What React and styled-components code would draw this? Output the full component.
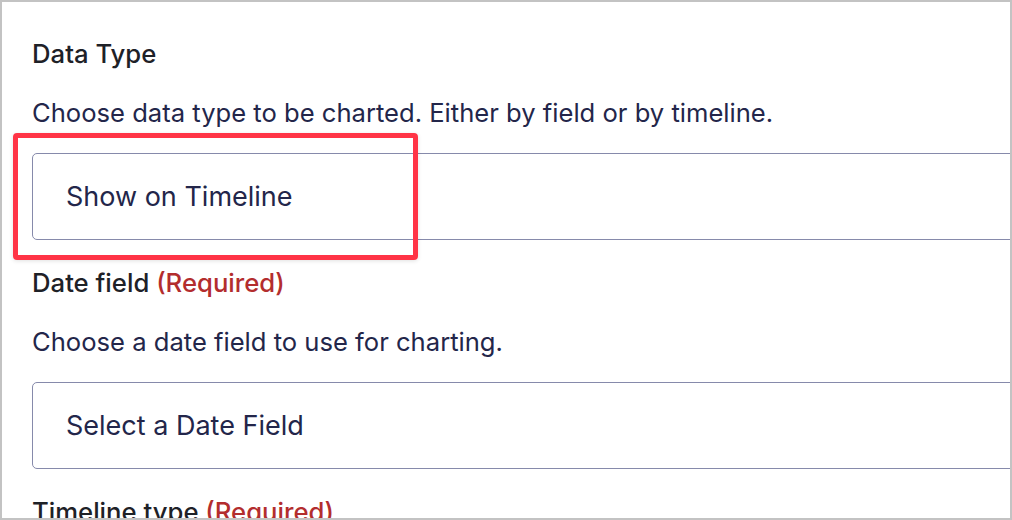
import React from 'react';
import styled, { createGlobalStyle } from 'styled-components';

const GlobalStyle = createGlobalStyle`
  html, body {
    margin: 0;
    padding: 0;
    background: #fff;
  }
  * {
    box-sizing: border-box;
  }
`;

const Frame = styled.div`
  width: 1012px;
  height: 520px;
  border: 2px solid #c3c3c3;
  overflow: hidden;
  background: #fff;
  font-family: Inter, "Noto Sans", sans-serif;
  padding: 0 0 0 30px;
`;

const Field = styled.div`
  display: flex;
  flex-direction: column;
`;

const Label = styled.div`
  font-size: 25.7px;
  line-height: 36px;
  font-weight: 500;
  color: #1e2127;
  margin-top: ${props => props.first ? '34px' : '25px'};
`;

const Required = styled.span`
  color: #b32d2e;
`;

const Description = styled.p`
  margin: 23px 0 0;
  font-size: 25.6px;
  line-height: 36px;
  color: #23264a;
`;

const InputWrap = styled.div`
  position: relative;
  margin-top: 22px;
  width: calc(100% + 40px);
`;

const Select = styled.div`
  height: 87px;
  border: 1.5px solid #868aab;
  border-radius: 5px;
  display: flex;
  align-items: center;
  padding-left: 33px;
  font-size: 27px;
  color: #23264a;
`;

const Highlight = styled.div`
  position: absolute;
  top: -20px;
  left: -19px;
  width: 405px;
  height: 127px;
  border: 5px solid #ff3446;
  border-radius: 4px;
  box-shadow: 0 1px 4px rgba(0, 0, 0, 0.12);
  pointer-events: none;
`;

const fields = [
  {
    label: 'Data Type',
    description: 'Choose data type to be charted. Either by field or by timeline.',
    value: 'Show on Timeline',
    highlight: true,
  },
  {
    label: 'Date field',
    required: true,
    description: 'Choose a date field to use for charting.',
    value: 'Select a Date Field',
  },
  {
    label: 'Timeline type',
    required: true,
    description: 'Choose how the timeline is grouped.',
    value: 'Select a Timeline Type',
  },
];

const App = () => (
  <>
    <GlobalStyle />
    <Frame>
      {fields.map((f, i) => (
        <Field key={f.label}>
          <Label first={i === 0}>
            {f.label}
            {f.required && <Required> (Required)</Required>}
          </Label>
          <Description>{f.description}</Description>
          <InputWrap>
            <Select>{f.value}</Select>
            {f.highlight && <Highlight />}
          </InputWrap>
        </Field>
      ))}
    </Frame>
  </>
);

export default App;
